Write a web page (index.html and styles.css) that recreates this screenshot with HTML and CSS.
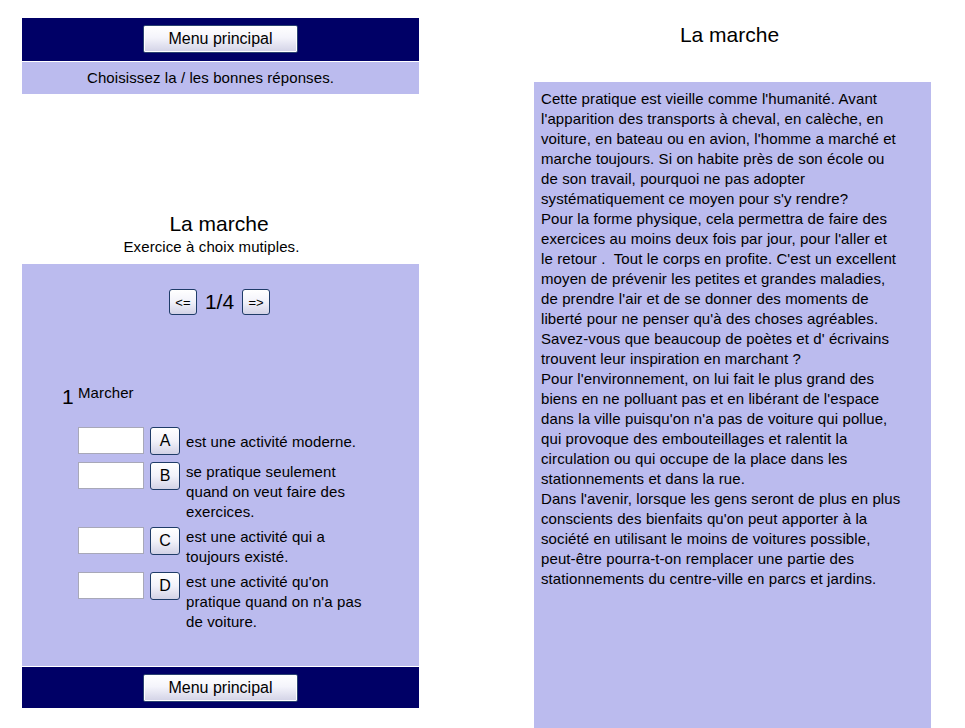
FILE: index.html
```html
<!DOCTYPE html>
<html lang="fr">
<head>
<meta charset="utf-8">
<title>La marche</title>
<link rel="stylesheet" href="styles.css">
</head>
<body>
<div class="page">
  <div class="left">
    <div class="bar bar-top"><button class="menu-btn">Menu principal</button></div>
    <div class="instr">Choisissez la / les bonnes réponses.</div>

    <div class="ex-head">
      <div class="ex-title">La marche</div>
      <div class="ex-sub">Exercice à choix mutiples.</div>
    </div>

    <div class="quiz">
      <div class="nav">
        <button class="nav-btn">&lt;=</button>
        <span class="count">1/4</span>
        <button class="nav-btn">=&gt;</button>
      </div>
      <div class="question">
        <span class="qnum">1</span>
        <span class="qtext">Marcher</span>
      </div>
      <div class="choices">
        <div class="choice">
          <input class="answer" type="text">
          <button class="letter">A</button>
          <span class="ctext">est une activité moderne.</span>
        </div>
        <div class="choice">
          <input class="answer" type="text">
          <button class="letter">B</button>
          <span class="ctext">se pratique seulement quand on veut faire des exercices.</span>
        </div>
        <div class="choice">
          <input class="answer" type="text">
          <button class="letter">C</button>
          <span class="ctext">est une activité qui a toujours existé.</span>
        </div>
        <div class="choice">
          <input class="answer" type="text">
          <button class="letter">D</button>
          <span class="ctext">est une activité qu'on pratique quand on n'a pas de voiture.</span>
        </div>
      </div>
    </div>
    <div class="bar bar-bottom"><button class="menu-btn">Menu principal</button></div>
  </div>

  <div class="right">
    <div class="read-title">La marche</div>
    <div class="reading">
      <p>Cette pratique est vieille comme l'humanité. Avant l'apparition des transports à cheval, en calèche, en voiture, en bateau ou en avion, l'homme a marché et marche toujours. Si on habite près de son école ou de son travail, pourquoi ne pas adopter systématiquement ce moyen pour s'y rendre?<br>
      Pour la forme physique, cela permettra de faire des exercices au moins deux fois par jour, pour l'aller et le retour .&nbsp; Tout le corps en profite. C'est un excellent moyen de prévenir les petites et grandes maladies, de prendre l'air et de se donner des moments de liberté pour ne penser qu'à des choses agréables.<br>
      Savez-vous que beaucoup de poètes et d' écrivains trouvent leur inspiration en marchant ?<br>
      Pour l'environnement, on lui fait le plus grand des biens en ne polluant pas et en libérant de l'espace dans la ville puisqu'on n'a pas de voiture qui pollue, qui provoque des embouteillages et ralentit la circulation ou qui occupe de la place dans les stationnements et dans la rue.<br>
      Dans l'avenir, lorsque les gens seront de plus en plus conscients des bienfaits qu'on peut apporter à la société en utilisant le moins de voitures possible, peut-être pourra-t-on remplacer une partie des stationnements du centre-ville en parcs et jardins.</p>
    </div>
  </div>
</div>
</body>
</html>
```

FILE: styles.css
```css
html, body {
  margin: 0;
  padding: 0;
  background: #ffffff;
  overflow: hidden;
}

body {
  font-family: "Liberation Sans", Arial, sans-serif;
  color: #000;
  font-size: 15px;
  letter-spacing: 0.1px;
}

.page {
  display: flex;
  align-items: flex-start;
  padding-left: 22px;
  gap: 115px;
  height: 728px;
}

.left {
  width: 397px;
  padding-top: 18px;
}

.bar {
  background: #000066;
  display: flex;
  justify-content: center;
}

.bar-top {
  height: 43px;
  padding-top: 7px;
  box-sizing: border-box;
}

.bar-bottom {
  height: 42px;
  border-top: 1px solid #ffffff;
  padding-top: 7px;
  box-sizing: border-box;
}

.menu-btn {
  width: 155px;
  height: 28px;
  font-family: "Liberation Sans", Arial, sans-serif;
  font-size: 16px;
  letter-spacing: 0;
  color: #000;
  border: 1px solid #2a4270;
  border-radius: 2px;
  background: linear-gradient(#ffffff 0%, #f4f4fb 45%, #d2d2e6 100%);
  box-shadow: inset 0 0 0 1px #ffffff;
  padding: 0;
}

.instr {
  background: #bbbbee;
  border-top: 1px solid #ffffff;
  height: 32px;
  line-height: 32px;
  text-align: center;
  font-size: 15px;
  padding-right: 20px;
}

.ex-head {
  margin-top: 118px;
  text-align: center;
  height: 52px;
}

.ex-title {
  font-size: 21px;
  line-height: 24px;
  letter-spacing: 0;
  padding-right: 3px;
}

.ex-sub {
  font-size: 15px;
  line-height: 18px;
  margin-top: 2px;
  padding-right: 18px;
}

.quiz {
  background: #bbbbee;
  height: 402px;
  padding-top: 25px;
  box-sizing: border-box;
}

.nav {
  display: flex;
  justify-content: center;
  align-items: center;
  gap: 8px;
  height: 26px;
  padding-right: 2px;
}

.nav-btn {
  width: 28px;
  height: 26px;
  padding: 0;
  font-family: "Liberation Sans", Arial, sans-serif;
  font-size: 13px;
  letter-spacing: 0;
  color: #000;
  border: 1px solid #1f3c68;
  border-radius: 3px;
  background: linear-gradient(#ffffff 0%, #f2f2fa 50%, #d2d2e6 100%);
}

.count {
  font-size: 21px;
  line-height: 26px;
  letter-spacing: 0;
}

.question {
  display: flex;
  align-items: flex-start;
  margin-top: 69px;
  padding-left: 40px;
}

.qnum {
  width: 16px;
  font-size: 21px;
  line-height: 24px;
  margin-top: 1px;
}

.qtext {
  font-size: 15px;
  line-height: 18px;
}

.choices {
  margin-top: 18px;
  padding-left: 56px;
  display: flex;
  flex-direction: column;
  gap: 5px;
}

.choice {
  display: flex;
  align-items: flex-start;
  min-height: 30px;
}

.answer {
  width: 66px;
  height: 27px;
  box-sizing: border-box;
  border: 1px solid #a8a8b8;
  background: #ffffff;
  margin: 0 6px 0 0;
  padding: 0;
}

.letter {
  width: 30px;
  height: 28px;
  padding: 0;
  margin: 0 6px 0 0;
  font-family: "Liberation Sans", Arial, sans-serif;
  font-size: 16px;
  letter-spacing: 0;
  color: #000;
  border: 1px solid #1f3c68;
  border-radius: 3px;
  background: linear-gradient(#ffffff 0%, #f2f2fa 50%, #d2d2e6 100%);
}

.ctext {
  width: 180px;
  font-size: 15px;
  line-height: 20px;
  align-self: center;
}

.right {
  width: 397px;
}

.read-title {
  font-size: 21px;
  line-height: 24px;
  letter-spacing: 0;
  text-align: center;
  margin-top: 23px;
  padding-right: 6px;
}

.reading {
  margin-top: 35px;
  background: #bbbbee;
  height: 660px;
  padding: 7px 30px 0 7px;
  box-sizing: border-box;
}

.reading p {
  margin: 0;
  font-size: 15px;
  line-height: 20px;
}
```
